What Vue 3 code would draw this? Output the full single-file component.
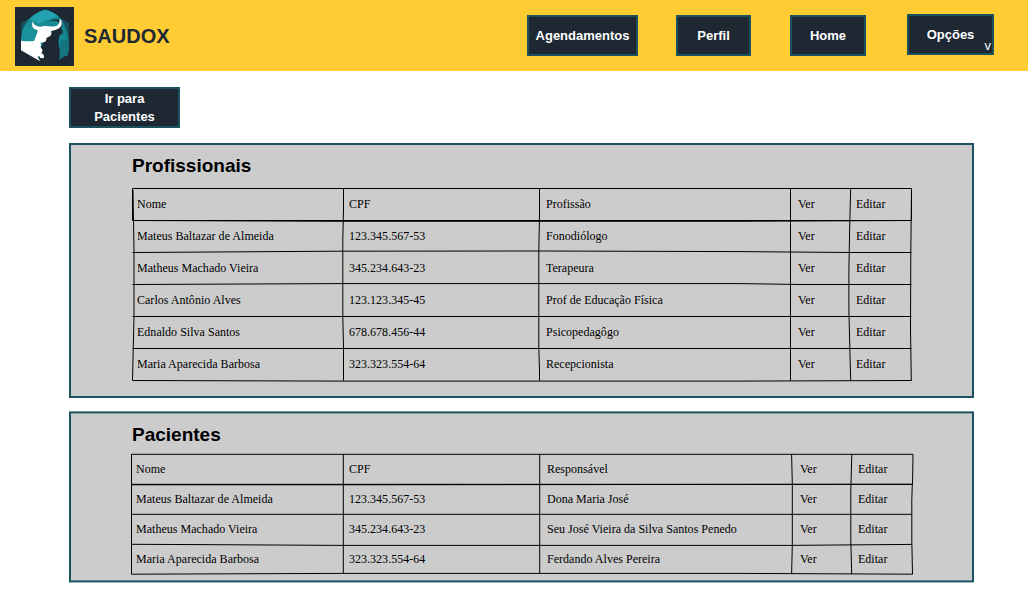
<script setup>
const nav = [
  { label: 'Agendamentos', cls: 'agenda' },
  { label: 'Perfil', cls: 'perfil' },
  { label: 'Home', cls: 'home' },
  { label: 'Opções', cls: 'opcoes', menu: true },
]

const panels = [
  {
    title: 'Profissionais',
    cls: 'prof',
    viewBox: '131 187 784 196',
    frame: { height: 255, y: 1, h: 253 },
    lines: [
      'M132.5 220.5V188.5H911.5V220.5Z',
      'M133 190L133.5 220L134 252V316L132.5 380.5',
      'M132.5 220.5L340 221.3H740L911.5 220.5',
      'M132.5 252.5L340 251.2L540 251L740 251.6L850 252.5H911.5',
      'M132.5 284.5L340 283.6H740L800 284.5H911.5',
      'M132.5 316.5H911.5M132.5 348.5H911.5',
      'M132.5 380.5L340 381.1H740L911.5 380.5',
      'M343.5 188.5V210L342.8 240V316L343.5 348V380.5',
      'M539.5 188.5V215L538.8 252V348L539.5 370V380.5',
      'M790.5 188.5V380.5',
      'M850.7 188.5L849.6 230L848.9 270V310L849.6 340L850.7 380.5',
      'M911.5 190L910.8 252L910.5 330L911.3 380.5',
    ],
    rows: [
      ['Nome', 'CPF', 'Profissão', 'Ver', 'Editar'],
      ['Mateus Baltazar de Almeida', '123.345.567-53', 'Fonodiólogo', 'Ver', 'Editar'],
      ['Matheus Machado Vieira', '345.234.643-23', 'Terapeura', 'Ver', 'Editar'],
      ['Carlos Antônio Alves', '123.123.345-45', 'Prof de Educação Física', 'Ver', 'Editar'],
      ['Ednaldo Silva Santos', '678.678.456-44', 'Psicopedagôgo', 'Ver', 'Editar'],
      ['Maria Aparecida Barbosa', '323.323.554-64', 'Recepcionista', 'Ver', 'Editar'],
    ],
  },
  {
    title: 'Pacientes',
    cls: 'pac',
    viewBox: '131 453 784 124',
    frame: { height: 172, y: 1.4, h: 169 },
    lines: [
      'M131.5 484.3V454.3H913L912.5 484.3Z',
      'M131.5 484.8H340L912 484.3',
      'M131.5 484V574.2L340 573.4H740L912.5 574.2',
      'M131.5 514.3H912',
      'M131.5 544.3L200 544.6L340 545.4H790L912 544.4',
      'M343.3 454V574',
      'M539.7 454V574',
      'M791.6 454L792.3 484V545L791.6 574',
      'M851.8 454L850.8 490V540L851.7 574',
      'M912.3 484L911.8 500V540L912.5 574.2',
    ],
    rows: [
      ['Nome', 'CPF', 'Responsável', 'Ver', 'Editar'],
      ['Mateus Baltazar de Almeida', '123.345.567-53', 'Dona Maria José', 'Ver', 'Editar'],
      ['Matheus Machado Vieira', '345.234.643-23', 'Seu José Vieira da Silva Santos Penedo', 'Ver', 'Editar'],
      ['Maria Aparecida Barbosa', '323.323.554-64', 'Ferdando Alves Pereira', 'Ver', 'Editar'],
    ],
  },
]
</script>

<template>
  <div class="page">
    <header class="bar">
      <svg class="logo" viewBox="0 0 177 177" aria-hidden="true">
        <rect width="177" height="177" fill="#1d2833" />
        <path d="M90 8L162 48V130L90 168L18 130V48Z" fill="#17505c" />
        <path d="M90 8C66 14 44 29 33 49C21 70 18 94 18 122L80 138L158 146C162 130 161 112 160 104C159 81 151 55 138 37C124 19 106 11 90 8Z" fill="#178b94" />
        <path d="M90 8C74 12 55 24 45 35L72 50L94 40L120 29L133 31C122 19 106 12 90 8Z" fill="#23a3b1" />
        <path d="M32 50L52 63L66 83L60 100H18C19 80 23 65 32 50Z" fill="#1a929c" />
        <path d="M138 37L146 62L140 84L160 98C158 76 150 54 138 37Z" fill="#17828c" />
        <path d="M136 101L160 97C162 115 162 130 157 144L132 158Z" fill="#14747f" />
        <path d="M101 44C112 36 127 34 139 40C143 47 142 58 138 65C144 69 145 76 141 81C136 83 132 86 132 94C129 103 132 116 134 130C135 142 133 154 130 163L90 174L72 168L78 120L92 92L106 68H120C131 63 136 52 132 46C124 40 112 41 101 44Z" fill="#1d2833" />
        <path d="M54 42C49 52 52 63 60 67L68 70C67 79 64 86 60 94L58 101C49 105 32 102 18 101V130L65 157L76 163L68 151L72 146L76 153L86 154L87 147L84 140L79 140L83 129L76 119L79 114L76 108L91 104L94 98C93 92 99 90 105 88L109 82V72C122 70 133 66 138 58C141 51 141 44 138 38L133 37C136 48 129 56 120 58C109 60 98 56 86 57C75 61 67 58 60 54C56 51 54 47 54 42Z" fill="#fff" />
      </svg>
      <span class="brand">SAUDOX</span>
      <nav class="nav">
        <button v-for="n in nav" :key="n.label" class="btn" :class="n.cls">
          {{ n.label }}<span v-if="n.menu" class="caret">v</span>
        </button>
      </nav>
    </header>

    <main class="content">
      <button class="btn jump">Ir para<br />Pacientes</button>

      <section v-for="p in panels" :key="p.title" class="panel" :class="p.cls">
        <svg class="frame" width="905" :height="p.frame.height" aria-hidden="true">
          <rect x="1" :y="p.frame.y" width="903" :height="p.frame.h" fill="#ccc" stroke="#1a535f" stroke-width="2" />
        </svg>
        <h2>{{ p.title }}</h2>
        <div class="table">
          <svg class="rules" :viewBox="p.viewBox" aria-hidden="true">
            <path v-for="(d, i) in p.lines" :key="i" :d="d" fill="none" stroke="#000" stroke-width="1" />
          </svg>
          <div v-for="(r, i) in p.rows" :key="i" class="row">
            <span v-for="(c, j) in r" :key="j">{{ c }}</span>
          </div>
        </div>
      </section>
    </main>
  </div>
</template>

<style>
html,
body {
  margin: 0;
  background: #fff;
}
</style>

<style scoped>
.page {
  width: 1028px;
  height: 608px;
  overflow: hidden;
  font-family: "Liberation Sans", Arial, sans-serif;
}
.bar {
  display: flex;
  align-items: flex-start;
  box-sizing: border-box;
  height: 71px;
  padding-left: 15px;
  background: #fc3;
}
.logo {
  width: 59px;
  height: 59px;
  margin-top: 7.4px;
}
.brand {
  width: 86px;
  margin: 24px 0 0 10px;
  font-size: 20px;
  line-height: 24px;
  font-weight: bold;
  color: #1d2833;
}
.nav {
  display: flex;
  margin: 15px 0 0 357px;
}
.btn {
  box-sizing: border-box;
  height: 41px;
  padding: 0;
  border: 2px solid #1a535f;
  border-radius: 0;
  background: #1d2833;
  color: #fff;
  font: bold 13px/18px "Liberation Sans", Arial, sans-serif;
  text-align: center;
}
.agenda { width: 111px; }
.perfil { width: 75px; margin-left: 38px; }
.home { width: 76px; margin-left: 39px; }
.opcoes {
  position: relative;
  width: 87px;
  margin: -1px 0 0 41px;
}
.caret {
  position: absolute;
  right: 1px;
  bottom: 1px;
  font-size: 13px;
  line-height: 12px;
  font-weight: normal;
}
.content {
  padding: 16px 54px 0 69px;
}
.jump {
  display: block;
  width: 111px;
}
.panel {
  position: relative;
  box-sizing: border-box;
  width: 905px;
  padding-left: 62px;
}
.prof {
  height: 255px;
  margin-top: 15px;
  padding-top: 12px;
}
.pac {
  height: 172px;
  margin-top: 13px;
  padding-top: 13px;
}
.frame {
  position: absolute;
  left: 0;
  top: 0;
}
h2 {
  position: relative;
  margin: 0 0 0 1px;
  font-size: 19px;
  line-height: 22px;
  color: #000;
}
.table {
  position: relative;
  width: 784px;
  font-family: "Liberation Serif", "Times New Roman", serif;
  font-size: 12px;
  letter-spacing: 0.02px;
  color: #000;
}
.prof .table { margin-top: 10px; padding-top: 1px; height: 195px; }
.pac .table { margin-top: 7px; padding-top: 1px; height: 123px; }
.rules {
  position: absolute;
  inset: 0;
  width: 100%;
  height: 100%;
}
.row {
  position: relative;
  display: grid;
  white-space: nowrap;
}
.prof .row {
  grid-template-columns: 212px 197px 252px 58px 1fr;
  padding-left: 6px;
  line-height: 32px;
}
.pac .row {
  grid-template-columns: 213px 198px 253px 58px 1fr;
  padding-left: 5px;
  line-height: 30px;
}
</style>
